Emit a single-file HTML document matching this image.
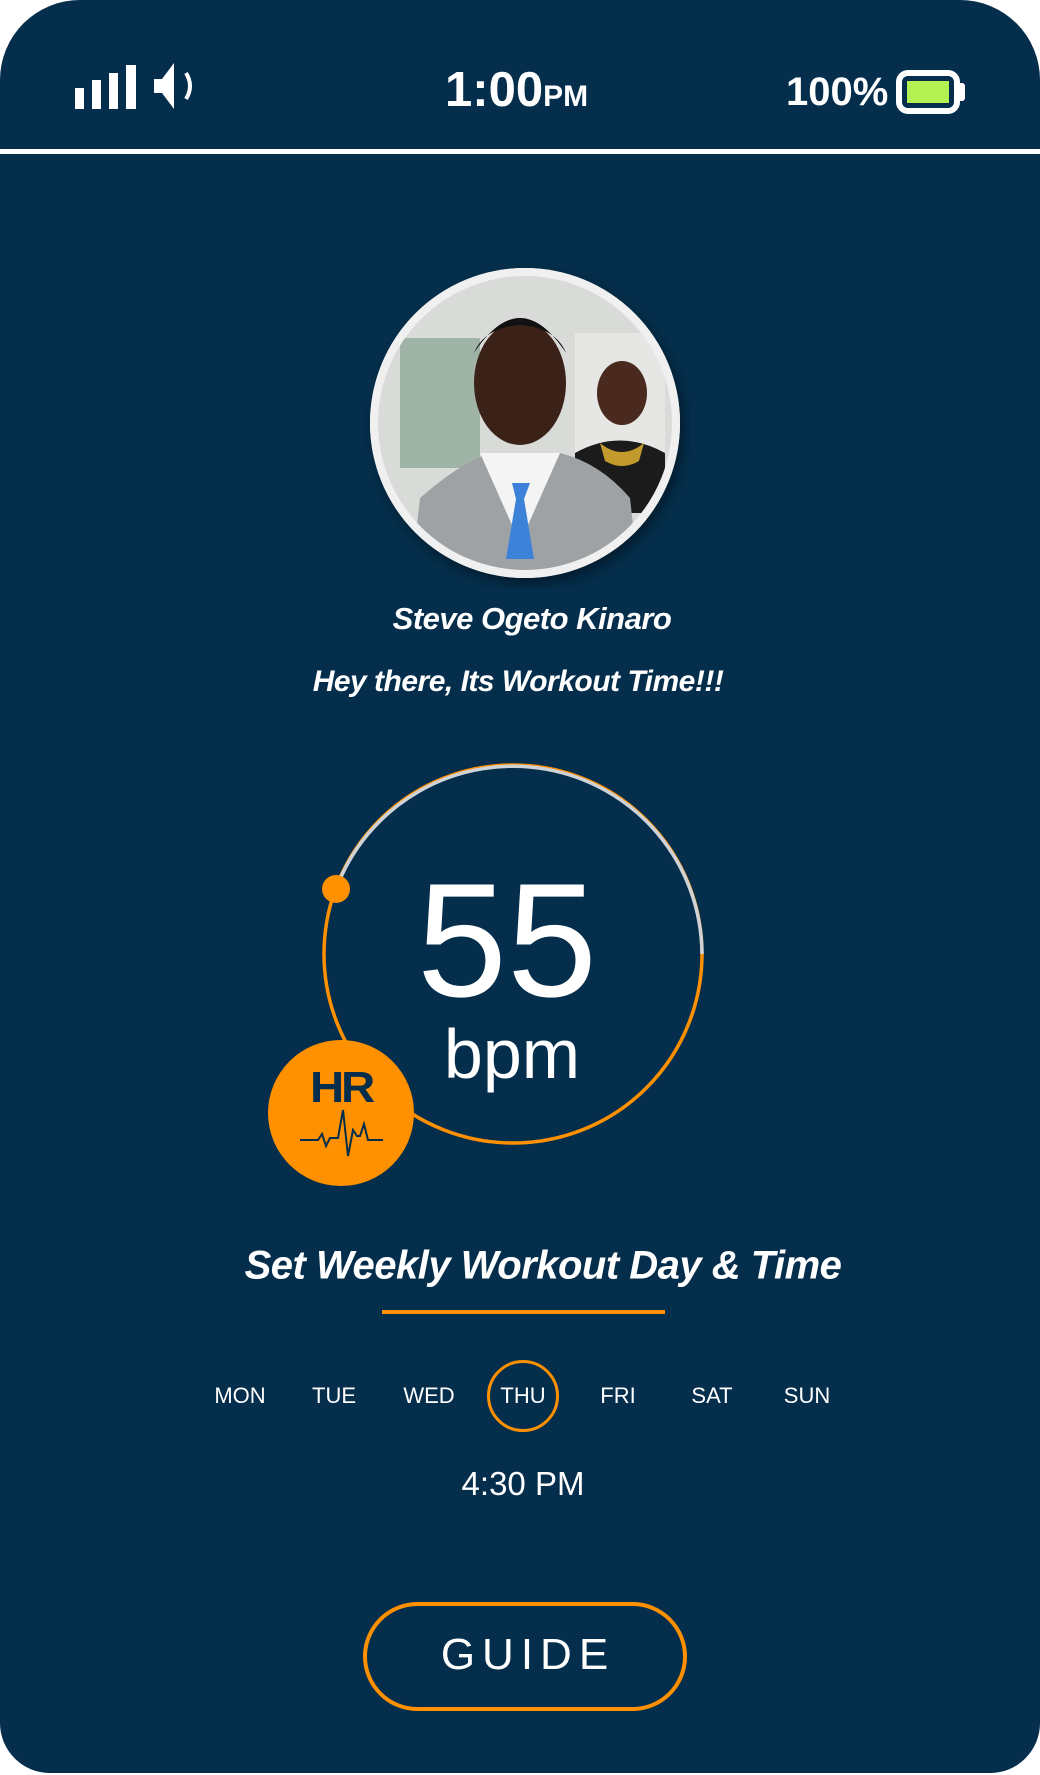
<!DOCTYPE html>
<html><head><meta charset="utf-8"><style>
html,body{margin:0;padding:0;background:#fff;}
body{width:1040px;height:1775px;position:relative;overflow:hidden;font-family:"Liberation Sans",sans-serif;}
.phone{position:absolute;left:0;top:0;width:1040px;height:1773px;background:#042e4b;border-radius:80px 80px 50px 50px;overflow:hidden;}
.abs{position:absolute;}
.t{position:absolute;color:#fff;white-space:nowrap;transform:translate(-50%,-50%);}
.day{font-size:22px;}
</style></head><body>
<div class="phone">
  <svg class="abs" style="left:0;top:0" width="1040" height="160">
    <rect x="75" y="88" width="9" height="21" fill="#fff"/>
    <rect x="92" y="80" width="9" height="29" fill="#fff"/>
    <rect x="109" y="73" width="9" height="36" fill="#fff"/>
    <rect x="126" y="65" width="10" height="44" fill="#fff"/>
    <path d="M154 79 h8 l12 -16 v46 l-12 -16 h-8 z" fill="#fff"/>
    <path d="M186 73 q8 13 0 26" stroke="#fff" stroke-width="4" fill="none"/>
    <rect x="899" y="73" width="58" height="38" rx="9" fill="none" stroke="#fff" stroke-width="6"/>
    <rect x="907" y="81" width="42" height="22" fill="#b5f152"/>
    <rect x="957" y="83" width="8" height="18" rx="3" fill="#fff"/>
    <rect x="0" y="149" width="1040" height="5" fill="#fff"/>
  </svg>
  <div class="abs" style="left:445px;top:60px;color:#fff;font-weight:bold;font-size:49px;line-height:60px;">1:00<span style="font-size:30px;">PM</span></div>
  <div class="abs" style="left:786px;top:67px;color:#fff;font-weight:bold;font-size:40px;line-height:50px;">100%</div>

  <svg class="abs" style="left:360px;top:258px" width="330" height="330">
    <defs><clipPath id="c"><circle cx="165" cy="165" r="150"/></clipPath>
    <filter id="sh"><feDropShadow dx="4" dy="6" stdDeviation="6" flood-color="#000" flood-opacity="0.4"/></filter></defs>
    <circle cx="165" cy="165" r="155" fill="#eeeeee" filter="url(#sh)"/>
    <g clip-path="url(#c)">
      <rect width="330" height="330" fill="#d8dbd8"/>
      <rect x="40" y="80" width="80" height="130" fill="#9fb3a6"/>
      <rect x="215" y="75" width="90" height="160" fill="#e6e6e4"/>
      <ellipse cx="262" cy="135" rx="25" ry="32" fill="#4a2a1e"/>
      <path d="M215 195 q45 -25 90 0 v60 h-90z" fill="#1b1b1b"/>
      <path d="M240 185 q22 18 44 0 l-5 18 q-17 10 -34 0z" fill="#c39a2c"/>
      <path d="M50 330 l10 -90 q40 -35 70 -45 h70 q40 10 70 45 l10 90z" fill="#9ea2a5"/>
      <path d="M120 195 l40 90 l40 -90z" fill="#f4f4f4"/>
      <path d="M152 225 h18 l-6 16 l10 60 h-28 l10 -60z" fill="#3b82d8"/>
      <ellipse cx="160" cy="125" rx="46" ry="62" fill="#3a2218"/>
      <path d="M114 95 q46 -70 92 0 q-10 -25 -46 -28 q-36 3 -46 28z" fill="#111"/>
    </g>
    <circle cx="165" cy="165" r="151" fill="none" stroke="#f0f0f0" stroke-width="8"/>
  </svg>

  <div class="t" style="left:532px;top:619px;font-size:31px;font-weight:bold;font-style:italic;letter-spacing:-0.5px;">Steve Ogeto Kinaro</div>
  <div class="t" style="left:518px;top:682px;font-size:30px;font-weight:bold;font-style:italic;letter-spacing:-0.5px;">Hey there, Its Workout Time!!!</div>

  <svg class="abs" style="left:0;top:0" width="1040" height="1240">
    <circle cx="513" cy="954" r="189" fill="none" stroke="#ff9000" stroke-width="3.5"/>
    <path d="M336 889 A189 189 0 0 1 702 954" fill="none" stroke="#cfd3d7" stroke-width="3.5"/>
    <circle cx="336" cy="889" r="14" fill="#ff9000"/>
    <circle cx="341" cy="1113" r="73" fill="#ff9000"/>
    <path d="M300 1140 h18 l4 -6 l4 12 l4 -8 h8 l5 -28 l5 46 l5 -26 l4 6 h3 l4 -12 l4 16 h15" fill="none" stroke="#042e4b" stroke-width="2"/>
    <text x="341" y="1102" text-anchor="middle" font-family="Liberation Sans" font-weight="bold" font-size="44" fill="#042e4b" letter-spacing="-3" textLength="62" lengthAdjust="spacingAndGlyphs">HR</text>
    <text x="507" y="996" text-anchor="middle" font-family="Liberation Sans" font-size="162" fill="#fff">55</text>
    <text x="512" y="1078" text-anchor="middle" font-family="Liberation Sans" font-size="70" fill="#fff">bpm</text>
  </svg>

  <div class="t" style="left:543px;top:1266px;font-size:40px;font-weight:bold;font-style:italic;letter-spacing:-0.5px;">Set Weekly Workout Day &amp; Time</div>
  <div class="abs" style="left:382px;top:1310px;width:283px;height:4px;background:#ff9000;"></div>

  <div class="abs" style="left:487px;top:1360px;width:72px;height:72px;border:3.5px solid #ff9000;border-radius:50%;box-sizing:border-box;"></div>
  <div class="t day" style="left:240px;top:1396px;">MON</div>
  <div class="t day" style="left:334px;top:1396px;">TUE</div>
  <div class="t day" style="left:429px;top:1396px;">WED</div>
  <div class="t day" style="left:523px;top:1396px;">THU</div>
  <div class="t day" style="left:618px;top:1396px;">FRI</div>
  <div class="t day" style="left:712px;top:1396px;">SAT</div>
  <div class="t day" style="left:807px;top:1396px;">SUN</div>

  <div class="t" style="left:523px;top:1484px;font-size:33px;">4:30 PM</div>

  <div class="abs" style="left:363px;top:1602px;width:324px;height:109px;border:4px solid #ff9000;border-radius:55px;box-sizing:border-box;"></div>
  <div class="t" style="left:528px;top:1655px;font-size:44px;letter-spacing:7px;">GUIDE</div>
</div>
</body></html>
